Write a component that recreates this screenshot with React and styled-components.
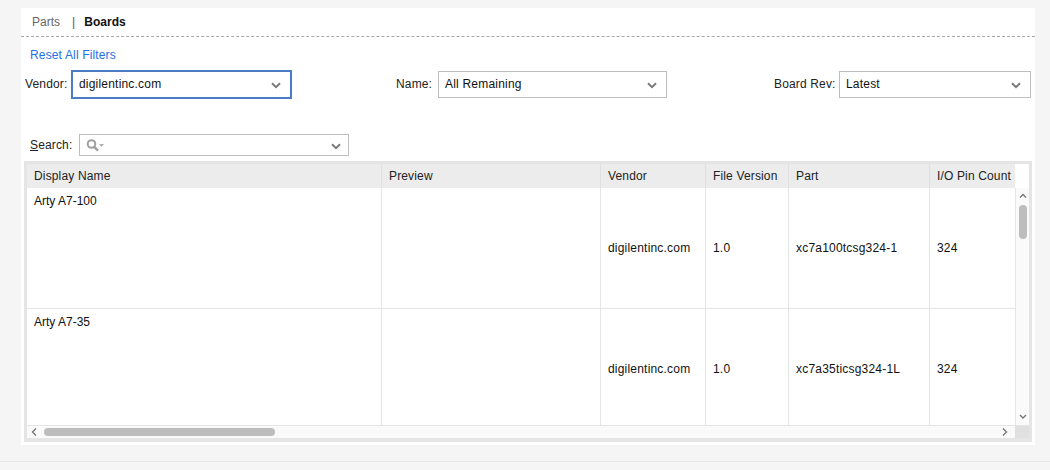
import React from "react";
import styled, { createGlobalStyle } from "styled-components";

const Global = createGlobalStyle`
  html, body { margin: 0; padding: 0; background: #f5f5f5; }
  body { font-family: "Liberation Sans", Arial, sans-serif; font-size: 12px; color: #111; letter-spacing: .15px; }
`;
const Page = styled.div`
  width: 1050px; height: 470px; box-sizing: border-box; padding-top: 8px;
  display: flex; flex-direction: column; overflow: hidden;
`;
const Panel = styled.div`
  width: 1014px; height: 437px; margin-left: 21px; background: #fff;
  display: flex; flex-direction: column;
`;
const Footer = styled.div`margin-top: 16px; border-top: 1px solid #e5e5e5; flex: 1;`;
const Tabs = styled.div`
  height: 29px; box-sizing: border-box; border-bottom: 1px dashed #a8a8a8;
  display: flex; align-items: center; padding: 0 0 0 11px; line-height: 14px;
`;
const Tab = styled.span`
  font-weight: ${p => (p.$active ? 700 : 400)};
  color: ${p => (p.$active ? "#111" : "#666")};
  letter-spacing: 0;
`;
const TabSep = styled.span`margin: 0 9px 0 12px; color: #555;`;
const ResetLink = styled.a`
  display: block; margin: 11px 0 0 9px; height: 14px; line-height: 14px; color: #2470e8;
`;
const Filters = styled.div`display: flex; height: 29px; margin-top: 8px; align-items: flex-start;`;
const Filter = styled.div`
  display: flex; align-items: center;
  margin-left: ${p => p.$left}px;
  padding-top: ${p => (p.$focus ? 0 : 1)}px;
`;
const Label = styled.label`
  color: #222; line-height: 14px; padding-bottom: ${p => p.$pb || 2}px;
  width: ${p => p.$w}px; flex: none; white-space: nowrap;
`;
const Select = styled.div`
  width: ${p => p.$w}px; height: ${p => p.$h}px; box-sizing: border-box; flex: none;
  border: ${p => (p.$focus ? "2px solid #4a7bc4" : "1px solid #bdbdbd")};
  padding: 0 9px 0 6px;
  display: flex; align-items: center; justify-content: space-between;
  background: #fff;
`;
const SelectText = styled.span`line-height: 14px; padding-bottom: 1px; color: #111; letter-spacing: .2px;`;
const Chevron = styled.svg`width: 10px; height: 7px; flex: none; margin-top: ${p => p.$mt ?? 1}px;`;
const SearchRow = styled.div`display: flex; align-items: center; margin: 35px 0 0 9px;`;
const Underline = styled.span`text-decoration: underline;`;
const SearchCombo = styled.div`
  width: 270px; height: 22px; box-sizing: border-box; border: 1px solid #bdbdbd;
  display: flex; align-items: center; justify-content: space-between;
  padding: 0 7px 0 6px;
`;
const Frame = styled.div`
  width: 1008px; height: 281px; box-sizing: border-box; margin: 5px 0 0 3px;
  border: 3px solid #e5e5e5; border-bottom-width: 4px;
  display: flex; flex-direction: column; background: #fff;
`;
const Head = styled.div`display: flex; height: 24px; flex: none;`;
const HeadCells = styled.div`
  width: 988px; background: #ececec; display: grid;
  grid-template-columns: 354px 219px 105px 83px 141px 86px;
`;
const HeadCell = styled.div`
  padding: 0 0 1px 7px; display: flex; align-items: center; color: #222; white-space: nowrap;
  & + & { border-left: 1px solid #e0e0e0; }
`;
const Middle = styled.div`display: flex; flex: 1; min-height: 0;`;
const Rows = styled.div`width: 988px; overflow: hidden;`;
const Row = styled.div`
  display: grid; height: 121px; box-sizing: border-box; border-bottom: 1px solid #e5e5e5;
  grid-template-columns: 354px 219px 105px 83px 141px 86px;
`;
const Cell = styled.div`
  padding-left: 7px; display: flex; color: #111; white-space: nowrap;
  align-items: ${p => (p.$top ? "flex-start" : "center")};
  padding-top: ${p => (p.$top ? 6 : 0)}px;
  line-height: 14px;
  letter-spacing: ${p => (p.$top ? "0" : ".2px")};
  & + & { border-left: 1px solid #e5e5e5; }
`;
const VBar = styled.div`
  width: 14px; box-sizing: border-box; background: #fafafa; border-left: 1px solid #e5e5e5;
  display: flex; flex-direction: column; align-items: center; padding: 5px 0 5px 0;
`;
const VThumb = styled.div`
  width: 8px; height: 34px; margin-top: 6px; border-radius: 4px; background: #bdbdbd; flex: none;
`;
const VSpacer = styled.div`flex: 1;`;
const Bottom = styled.div`display: flex; height: 12px; flex: none; border-top: 1px solid #e5e5e5;`;
const HBar = styled.div`
  width: 988px; background: #fafafa; display: flex; align-items: center; padding: 0 7px 0 4px; box-sizing: border-box;
`;
const HThumb = styled.div`width: 231px; height: 8px; margin-left: 7px; border-radius: 4px; background: #bdbdbd;`;
const Corner = styled.div`width: 14px; background: #e0e0e0;`;

const ChevronDown = ({ mt }) => (
  <Chevron $mt={mt} viewBox="0 0 10 7"><path d="M1 1.2 5 5.2 9 1.2" fill="none" stroke="#7a7a7a" strokeWidth="2" /></Chevron>
);
const Small = ({ d, w = 8, h = 6 }) => (
  <svg width={w} height={h} viewBox={`0 0 ${w} ${h}`} style={{ flex: "none" }}><path d={d} fill="none" stroke="#777" strokeWidth="1.4" /></svg>
);
const SearchIcon = () => (
  <svg width="18" height="13" viewBox="0 0 18 13">
    <circle cx="5.5" cy="5" r="3.8" fill="none" stroke="#a0a0a0" strokeWidth="2" />
    <path d="M8.2 7.8 12 11.6" stroke="#a0a0a0" strokeWidth="2.4" />
    <path d="M13 5h5l-2.5 3z" fill="#b0b0b0" />
  </svg>
);

const columns = ["Display Name", "Preview", "Vendor", "File Version", "Part", "I/O Pin Count"];
const rows = [
  ["Arty A7-100", "", "digilentinc.com", "1.0", "xc7a100tcsg324-1", "324"],
  ["Arty A7-35", "", "digilentinc.com", "1.0", "xc7a35ticsg324-1L", "324"],
];

export default function App() {
  return (
    <Page>
      <Global />
      <Panel>
        <Tabs>
          <Tab>Parts</Tab>
          <TabSep>|</TabSep>
          <Tab $active>Boards</Tab>
        </Tabs>
        <ResetLink>Reset All Filters</ResetLink>
        <Filters>
          <Filter $left={4} $focus>
            <Label $w={46}>Vendor:</Label>
            <Select $w={221} $h={29} $focus><SelectText>digilentinc.com</SelectText><ChevronDown /></Select>
          </Filter>
          <Filter $left={104}>
            <Label $w={42}>Name:</Label>
            <Select $w={229} $h={27}><SelectText>All Remaining</SelectText><ChevronDown /></Select>
          </Filter>
          <Filter $left={107}>
            <Label $w={65}>Board Rev:</Label>
            <Select $w={192} $h={27}><SelectText>Latest</SelectText><ChevronDown /></Select>
          </Filter>
        </Filters>
        <SearchRow>
          <Label $pb={1} $w={49}><Underline>S</Underline>earch:</Label>
          <SearchCombo><SearchIcon /><ChevronDown mt={2} /></SearchCombo>
        </SearchRow>
        <Frame>
          <Head>
            <HeadCells>{columns.map(c => <HeadCell key={c}>{c}</HeadCell>)}</HeadCells>
          </Head>
          <Middle>
            <Rows>
              {rows.map(r => (
                <Row key={r[0]}>
                  {r.map((v, i) => <Cell key={i} $top={i === 0}>{v}</Cell>)}
                </Row>
              ))}
            </Rows>
            <VBar>
              <Small d="M1 4.5 4 1.5 7 4.5" />
              <VThumb />
              <VSpacer />
              <Small d="M1 1 4 4 7 1" />
            </VBar>
          </Middle>
          <Bottom>
            <HBar>
              <Small w={6} h={8} d="M5 .5 1.5 4 5 7.5" />
              <HThumb />
              <VSpacer />
              <Small w={6} h={8} d="M1 .5 4.5 4 1 7.5" />
            </HBar>
            <Corner />
          </Bottom>
        </Frame>
      </Panel>
      <Footer />
    </Page>
  );
}
